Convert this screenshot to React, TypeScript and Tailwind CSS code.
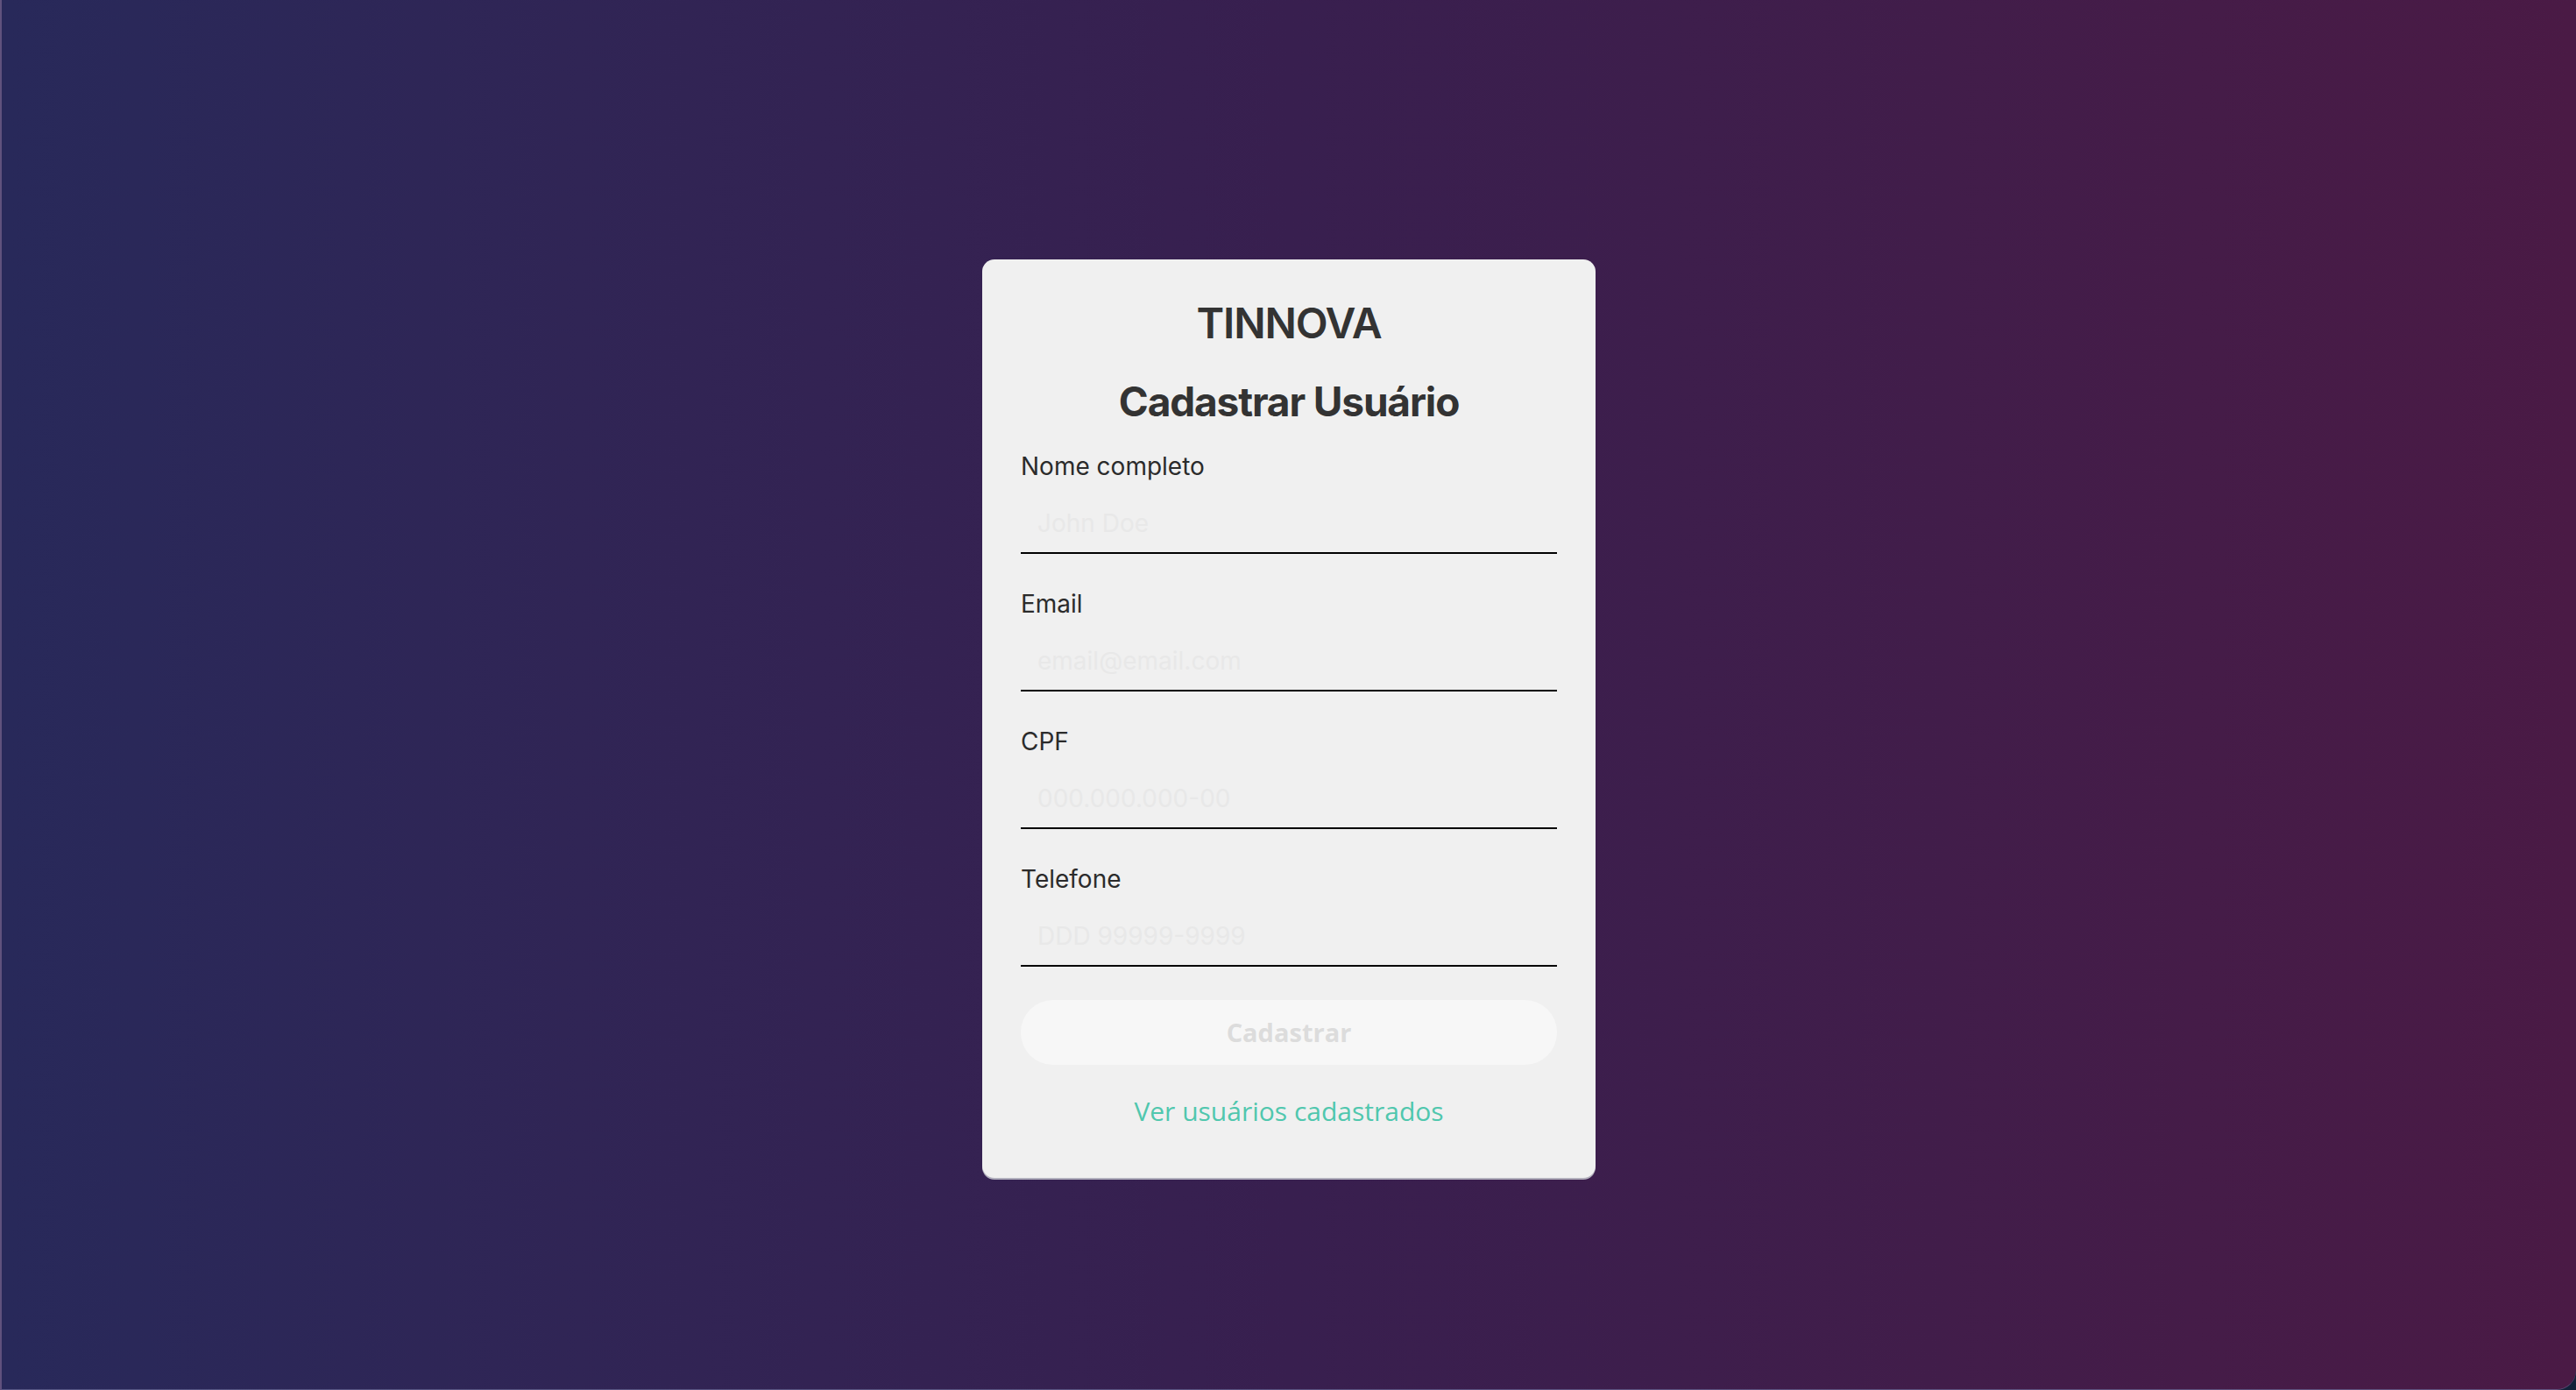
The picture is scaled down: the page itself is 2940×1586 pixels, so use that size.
import { useState } from 'react';

type Field = {
  name: string;
  label: string;
  placeholder: string;
  type?: string;
};

const fields: Field[] = [
  { name: 'nome', label: 'Nome completo', placeholder: 'John Doe' },
  { name: 'email', label: 'Email', placeholder: 'email@email.com', type: 'email' },
  { name: 'cpf', label: 'CPF', placeholder: '000.000.000-00' },
  { name: 'telefone', label: 'Telefone', placeholder: 'DDD 99999-9999' },
];

export default function App() {
  const [values, setValues] = useState<Record<string, string>>({});
  const filled = fields.every((f) => (values[f.name] ?? '').trim() !== '');

  return (
    <div className="h-screen w-full bg-[#13223a]">
      {/* window frame */}
      <div className="h-full w-full rounded-br-[22px] border-l-2 border-b border-[#6a6a96]/70 bg-gradient-to-r from-[#28295a] via-[#381f4f] to-[#4a1a45] flex items-center justify-center">
        {/* Card */}
        <div
          className="mt-[54px] w-[700px] rounded-[14px] bg-[#f0f0f0] px-[44px] pt-[44px] pb-[56px] shadow-[0_2px_0_rgba(190,190,200,0.9)] text-[#333333]"
          style={{ fontFamily: 'Inter, "Noto Sans", sans-serif' }}
        >
          <h1 className="text-center text-[48px] leading-[58px] font-semibold tracking-tight">TINNOVA</h1>
          <h2 className="mt-[34px] text-center text-[46px] leading-[52px] font-bold tracking-tight">
            Cadastrar Usuário
          </h2>

          <form className="mt-[28px] flex flex-col gap-[37px]" onSubmit={(e) => e.preventDefault()}>
            {fields.map((f) => (
              <div key={f.name} className="flex flex-col">
                <label htmlFor={f.name} className="text-[28px] leading-[40px] text-[#2b2b2b]">
                  {f.label}
                </label>
                <input
                  id={f.name}
                  type={f.type ?? 'text'}
                  placeholder={f.placeholder}
                  value={values[f.name] ?? ''}
                  onChange={(e) => setValues({ ...values, [f.name]: e.target.value })}
                  className="mt-[10px] h-[70px] w-full border-b-2 border-black bg-transparent px-[19px] pt-[2px] text-[28px] outline-none placeholder:text-[#e8e8e8]"
                />
              </div>
            ))}

            <button
              type="submit"
              disabled={!filled}
              className="mt-[1px] h-[74px] w-full rounded-full bg-[#f7f7f7] text-[29px] font-bold text-[#dcdcdc]"
              style={{ fontFamily: '"Open Sans", Lato, sans-serif' }}
            >
              Cadastrar
            </button>
          </form>

          <div className="mt-[33px] text-center">
            <a
              href="#"
              className="text-[30px] leading-[40px] text-[#50c7ae]"
              style={{ fontFamily: '"Open Sans", Lato, sans-serif' }}
            >
              Ver usuários cadastrados
            </a>
          </div>
        </div>
      </div>
    </div>
  );
}
